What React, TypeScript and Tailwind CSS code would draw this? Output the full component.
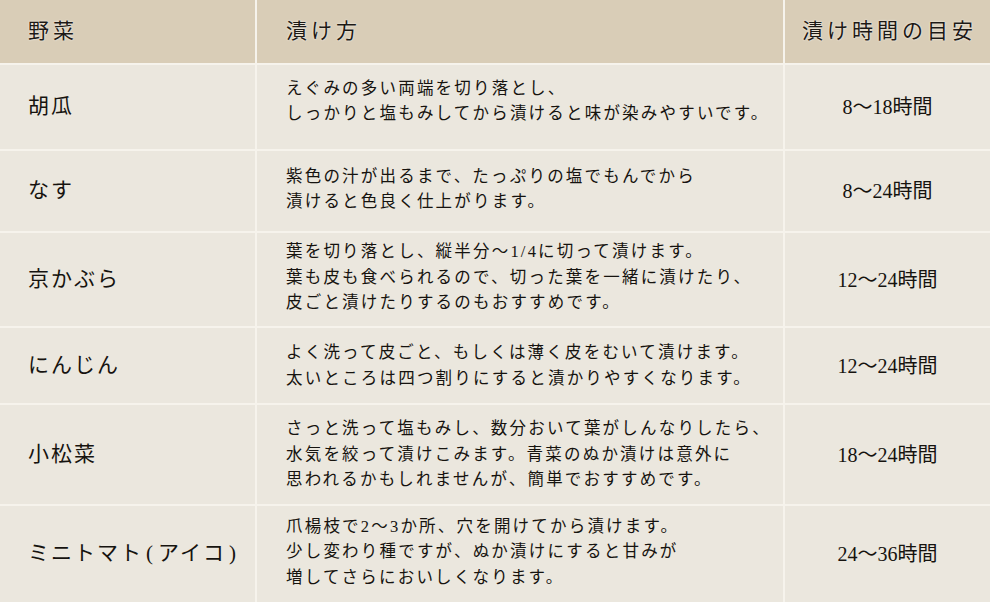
const rows = [
  {
    name: "胡瓜",
    how: ["えぐみの多い両端を切り落とし、", "しっかりと塩もみしてから漬けると味が染みやすいです。"],
    time: "8〜18時間",
    h: "h-[84px]",
    pad: "pb-3",
  },
  {
    name: "なす",
    how: ["紫色の汁が出るまで、たっぷりの塩でもんでから", "漬けると色良く仕上がります。"],
    time: "8〜24時間",
    h: "h-[80px]",
    pad: "pb-1",
  },
  {
    name: "京かぶら",
    how: [
      "葉を切り落とし、縦半分〜1/4に切って漬けます。",
      "葉も皮も食べられるので、切った葉を一緒に漬けたり、",
      "皮ごと漬けたりするのもおすすめです。",
    ],
    time: "12〜24時間",
    h: "h-[93px]",
    pad: "pb-1",
  },
  {
    name: "にんじん",
    how: ["よく洗って皮ごと、もしくは薄く皮をむいて漬けます。", "太いところは四つ割りにすると漬かりやすくなります。"],
    time: "12〜24時間",
    h: "h-[75px]",
    pad: "",
  },
  {
    name: "小松菜",
    how: [
      "さっと洗って塩もみし、数分おいて葉がしんなりしたら、",
      "水気を絞って漬けこみます。青菜のぬか漬けは意外に",
      "思われるかもしれませんが、簡単でおすすめです。",
    ],
    time: "18〜24時間",
    h: "h-[99px]",
    pad: "",
  },
  {
    name: "ミニトマト(アイコ)",
    how: [
      "爪楊枝で2〜3か所、穴を開けてから漬けます。",
      "少し変わり種ですが、ぬか漬けにすると甘みが",
      "増してさらにおいしくなります。",
    ],
    time: "24〜36時間",
    h: "h-[96px]",
    pad: "pb-1",
  },
];

// parentheses in the name column sit a little apart from the kana
function Name({ text }: { text: string }) {
  const parts = text.split(/([()])/);
  return (
    <>
      {parts.map((p, i) =>
        p === "(" || p === ")" ? (
          <span key={i} className="mx-[3px]">
            {p}
          </span>
        ) : (
          <span key={i}>{p}</span>
        )
      )}
    </>
  );
}

export default function App() {
  return (
    <div className="h-[602px] w-[990px] overflow-hidden bg-[#f6f3ec] font-['Liberation_Serif','Noto_Sans_CJK_JP',serif] text-[#16130f]">
      <div className="grid grid-cols-[255px_526px_205px] gap-[2px]">
        {/* header */}
        <div className="flex h-[63px] items-center bg-[#d9cdb7] pl-[28px] text-[21px] tracking-[4px] text-[#1d1915] [text-shadow:0_0_2px_#fff]">
          野菜
        </div>
        <div className="flex h-[63px] items-center bg-[#d9cdb7] pl-[29px] text-[21px] tracking-[4px] text-[#1d1915] [text-shadow:0_0_2px_#fff]">
          漬け方
        </div>
        <div className="flex h-[63px] items-center justify-center bg-[#d9cdb7] pl-[4px] text-[21px] tracking-[4px] text-[#1d1915] [text-shadow:0_0_2px_#fff]">
          漬け時間の目安
        </div>

        {rows.map((row) => (
          <div key={row.name} className="contents">
            <div className={`flex items-center bg-[#ebe7de] pl-[28px] text-[21px] tracking-[2px] ${row.h}`}>
              <Name text={row.name} />
            </div>
            <div
              className={`flex flex-col justify-center bg-[#ebe7de] pl-[29px] text-[16.5px] leading-[25.5px] tracking-[2.2px] ${row.h} ${row.pad}`}
            >
              {row.how.map((line) => (
                <span key={line}>{line}</span>
              ))}
            </div>
            <div className={`flex items-center justify-center bg-[#ebe7de] text-[20px] ${row.h}`}>
              {row.time}
            </div>
          </div>
        ))}
      </div>
    </div>
  );
}
